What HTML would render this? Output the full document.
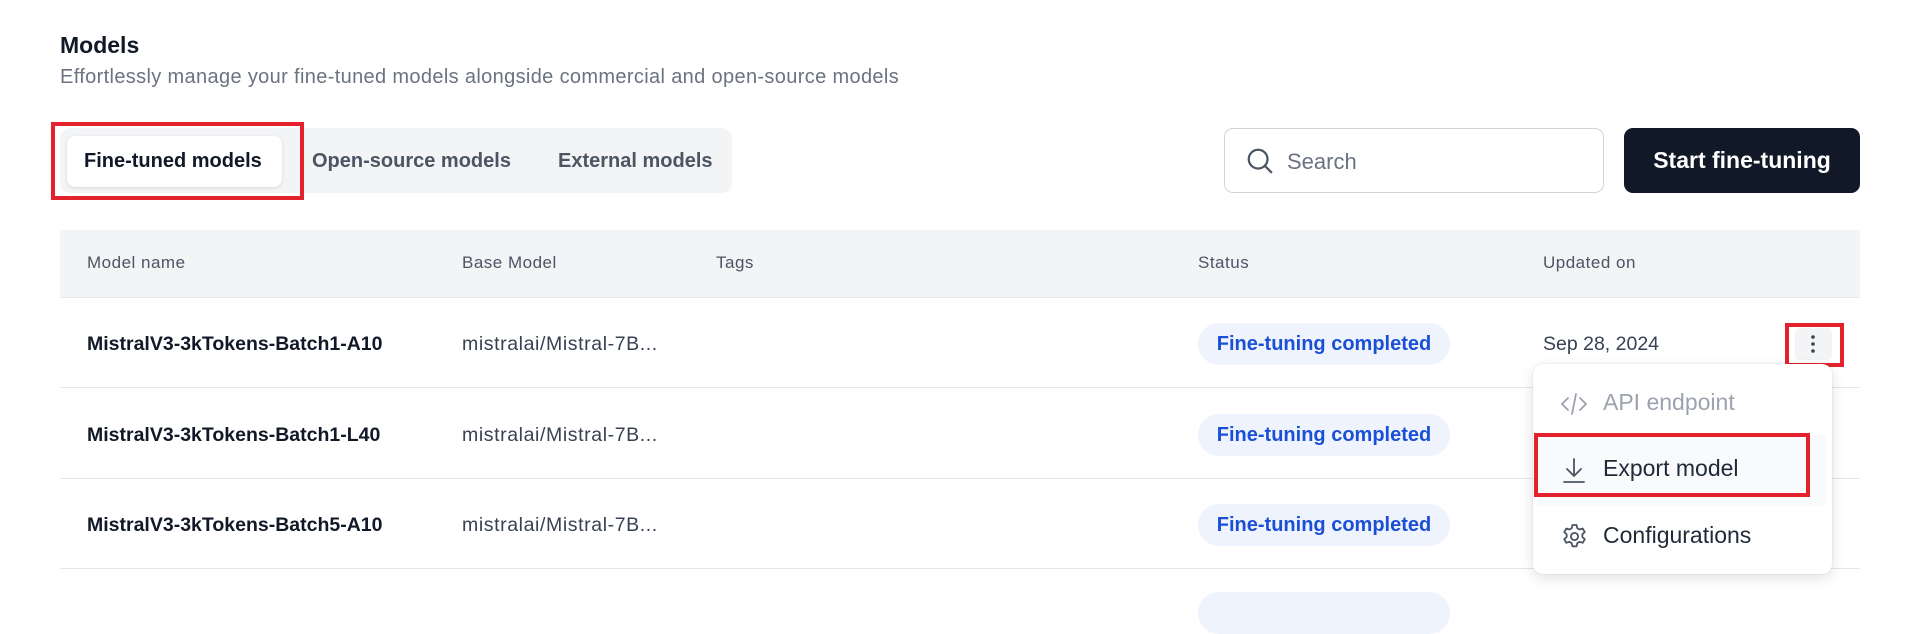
<!DOCTYPE html>
<html><head><meta charset="utf-8"><style>
*{box-sizing:border-box;margin:0;padding:0}
body{width:1920px;height:595px;background:#fff;font-family:"Liberation Sans",sans-serif;position:relative;overflow:hidden;color:#111827}
.a{position:absolute;white-space:nowrap}
h1{position:absolute;left:60px;top:32px;font-size:23px;font-weight:600;color:#111827}
.sub{left:60px;top:66px;font-size:20px;letter-spacing:.35px;color:#6b7280}
.tabs{left:60px;top:128px;width:672px;height:65px;background:#f3f4f6;border-radius:10px}
.tab{font-size:20px;font-weight:600;color:#4b5563;top:150px}
.act{left:67px;top:136px;width:215px;height:51px;background:#fff;border-radius:8px;box-shadow:0 1px 3px rgba(0,0,0,.12)}
.red{border:4px solid #e3222d}
.search{left:1224px;top:128px;width:380px;height:65px;border:1.5px solid #d1d5db;border-radius:9px}
.btn{left:1624px;top:128px;width:236px;height:65px;background:#111827;border-radius:9px;color:#fff;font-size:23px;font-weight:700;display:flex;align-items:center;justify-content:center}
.th{left:60px;top:230px;width:1800px;height:68px;background:#f3f4f6;border-bottom:1px solid #e5e7eb}
.hd{top:253px;font-size:17px;letter-spacing:.5px;color:#4b5563}
.line{left:60px;width:1800px;height:1px;background:#e5e7eb}
.nm{left:87px;font-size:19.5px;font-weight:600;color:#111827}
.bm{left:462px;font-size:19.5px;letter-spacing:.6px;color:#374151}
.badge{left:1198px;width:252px;height:42px;border-radius:21px;background:#eef3fd;color:#1a4fd6;font-size:20px;font-weight:600;display:flex;align-items:center;justify-content:center}
.menu{left:1533px;top:364px;width:299px;height:210px;background:#fff;border-radius:10px;box-shadow:0 4px 14px rgba(0,0,0,.12),0 0 0 1px rgba(0,0,0,.03)}
.mi{font-size:23px;left:1603px}
</style></head><body>
<h1>Models</h1>
<div class="a sub">Effortlessly manage your fine-tuned models alongside commercial and open-source models</div>
<div class="a tabs"></div>
<div class="a act"></div>
<div class="a tab" style="left:84px;color:#111827">Fine-tuned models</div>
<div class="a tab" style="left:312px">Open-source models</div>
<div class="a tab" style="left:558px">External models</div>
<div class="a red" style="left:51px;top:122px;width:253px;height:78px"></div>

<div class="a search"></div>
<svg class="a" style="left:1245px;top:146px" width="30" height="30" viewBox="0 0 24 24" fill="none" stroke="#4b5563" stroke-width="1.8" stroke-linecap="round"><circle cx="10.5" cy="10.5" r="7.5"/><path d="M16 16l5 5"/></svg>
<div class="a" style="left:1287px;top:149px;font-size:22px;color:#6b7280">Search</div>
<div class="a btn">Start fine-tuning</div>

<div class="a th"></div>
<div class="a hd" style="left:87px">Model name</div>
<div class="a hd" style="left:462px">Base Model</div>
<div class="a hd" style="left:716px">Tags</div>
<div class="a hd" style="left:1198px">Status</div>
<div class="a hd" style="left:1543px">Updated on</div>

<div class="a line" style="top:387px"></div>
<div class="a line" style="top:478px"></div>
<div class="a line" style="top:568px"></div>

<div class="a nm" style="top:333px">MistralV3-3kTokens-Batch1-A10</div>
<div class="a bm" style="top:333px">mistralai/Mistral-7B...</div>
<div class="a badge" style="top:323px">Fine-tuning completed</div>
<div class="a" style="left:1543px;top:333px;font-size:19.5px;color:#374151">Sep 28, 2024</div>

<div class="a nm" style="top:424px">MistralV3-3kTokens-Batch1-L40</div>
<div class="a bm" style="top:424px">mistralai/Mistral-7B...</div>
<div class="a badge" style="top:414px">Fine-tuning completed</div>

<div class="a nm" style="top:514px">MistralV3-3kTokens-Batch5-A10</div>
<div class="a bm" style="top:514px">mistralai/Mistral-7B...</div>
<div class="a badge" style="top:504px">Fine-tuning completed</div>
<div class="a badge" style="top:592px"></div>

<div class="a" style="left:1795px;top:328px;width:37px;height:32px;background:#f3f4f6;border-radius:5px"></div>
<svg class="a" style="left:1805px;top:332px" width="16" height="24" viewBox="0 0 16 24" fill="#374151"><circle cx="8" cy="5" r="1.8"/><circle cx="8" cy="12" r="1.8"/><circle cx="8" cy="19" r="1.8"/></svg>
<div class="a red" style="left:1785px;top:323px;width:59px;height:44px"></div>

<div class="a menu"></div>
<svg class="a" style="left:1560px;top:391px" width="28" height="26" viewBox="0 0 28 26" fill="none" stroke="#9ca3af" stroke-width="1.8" stroke-linecap="round" stroke-linejoin="round"><path d="M8 7l-6 6 6 6M20 7l6 6-6 6M16 3l-4 20"/></svg>
<div class="a mi" style="top:389px;color:#9ca3af">API endpoint</div>
<div class="a" style="left:1537px;top:435px;width:289px;height:71px;background:#f9fafb"></div>
<svg class="a" style="left:1561px;top:456px" width="26" height="28" viewBox="0 0 26 28" fill="none" stroke="#4b5563" stroke-width="1.8" stroke-linecap="round" stroke-linejoin="round"><path d="M13 3v17M6 13l7 7 7-7M3 26h20"/></svg>
<div class="a mi" style="top:455px;color:#1f2937">Export model</div>
<div class="a red" style="left:1534px;top:433px;width:276px;height:64px"></div>
<svg class="a" style="left:1560px;top:522px" width="29" height="29" viewBox="0 0 24 24" fill="none" stroke="#4b5563" stroke-width="1.5" stroke-linejoin="round"><path d="M10.3 2.5h3.4l.6 2.6 1.9 1.1 2.6-.8 1.7 2.9-2 1.9v2.2l2 1.9-1.7 2.9-2.6-.8-1.9 1.1-.6 2.6h-3.4l-.6-2.6-1.9-1.1-2.6.8-1.7-2.9 2-1.9v-2.2l-2-1.9 1.7-2.9 2.6.8 1.9-1.1z"/><circle cx="12" cy="12" r="3"/></svg>
<div class="a mi" style="top:522px;color:#1f2937">Configurations</div>
</body></html>
